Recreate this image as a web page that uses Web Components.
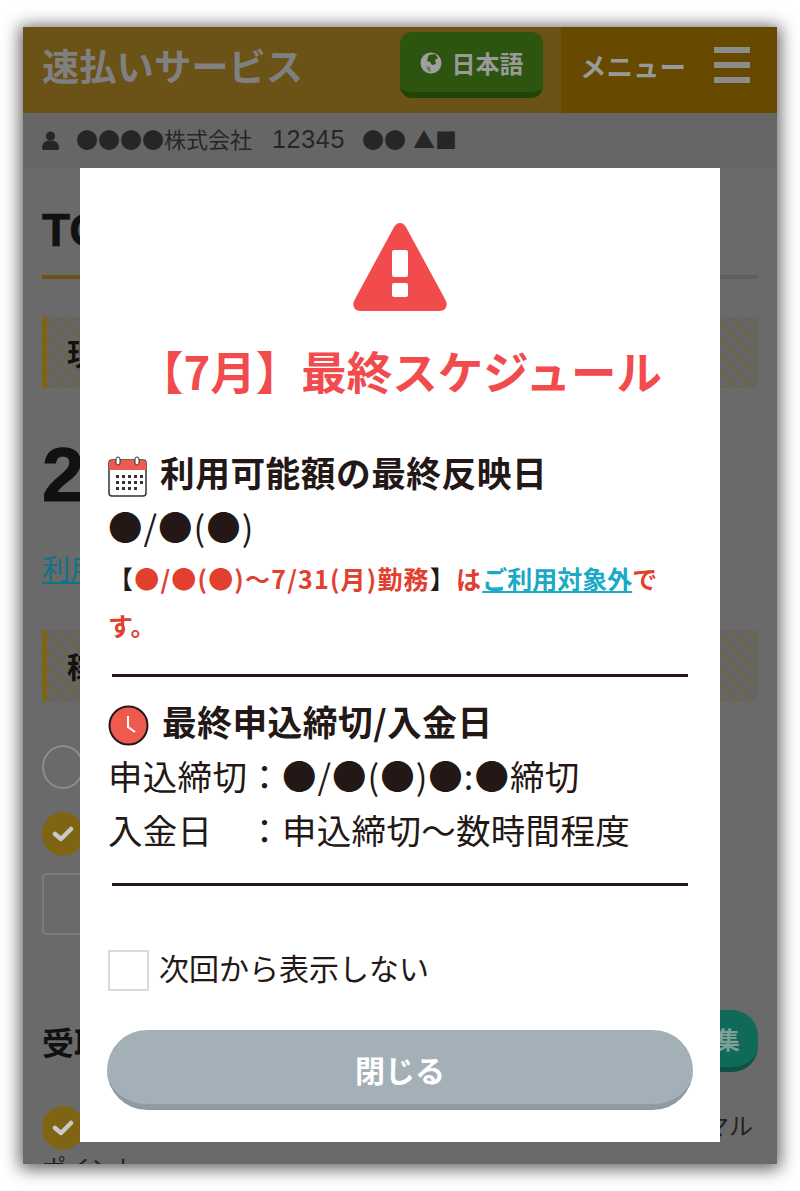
<!DOCTYPE html>
<html lang="ja"><head><meta charset="utf-8"><title>速払いサービス</title>
<style>
html,body{margin:0;background:#fff}
body{font-family:"Noto Sans CJK JP","Noto Sans",sans-serif;width:800px;height:1191px;overflow:hidden}
</style></head><body>
<x-phone>
  <x-topbar title-text="速払いサービス" lang-text="日本語" menu-text="メニュー"></x-topbar>
  <x-userbar>
    <span>●●●●株式会社</span>
    <span style="font:400 25px 'Liberation Sans',sans-serif;letter-spacing:.7px;margin:3px 0 0 3px">12345</span>
    <span>●●</span>
    <span style="margin-left:-10px">▲■</span>
  </x-userbar>
  <x-behind></x-behind>
  <x-modal></x-modal>
</x-phone>
<script>
const def=(name,html,setup)=>customElements.define(name,class extends HTMLElement{
  constructor(){super();this.attachShadow({mode:'open'}).innerHTML=html;}
  connectedCallback(){if(setup)setup(this);}
});
def('x-phone',`<style>
:host{display:flex;flex-direction:column;position:relative;width:754px;height:1137px;margin:27px 23px;background:#6a6a6a;overflow:hidden;box-shadow:0 2px 16px 3px rgba(0,0,0,.62)}
</style><slot></slot>`);
def('x-topbar',`<style>
:host{display:flex;height:86px;flex:none;background:#6b5216;align-items:stretch}
.logo{flex:1;padding-left:19px;font:700 37.300px/76px "Noto Sans CJK JP",sans-serif;color:#808080;white-space:nowrap}
.lang{box-sizing:border-box;width:143px;height:66px;margin:5px 18px 0 0;border-radius:12px;background:#2d5510;border-bottom:6px solid #214208;display:flex;align-items:center;justify-content:center;gap:10px;color:#9a9a9a;font:700 24px "Noto Sans CJK JP",sans-serif}
.menu{width:216px;background:#684900;display:flex;align-items:center;padding-left:19px;box-sizing:border-box;color:#999;font:700 26.500px "Noto Sans CJK JP",sans-serif}
.menu span{width:134px;white-space:nowrap;margin-top:-10px}
.burger{display:flex;flex-direction:column;justify-content:space-between;width:36px;height:36px;margin-top:-10px}
.burger i{height:6px;background:#8c8c8c}
svg{display:block}
</style>
<div class="logo" id="t"></div>
<div class="lang"><svg width="22" height="24" viewBox="0 -2 22 24"><circle cx="11" cy="11" r="10.500" fill="#a0a0a0"/><path d="M9 3l6-1 3 4-3 2 1 4-4 1-2-3-3-1 1-4z" fill="#2d5510"/><path d="M6 14l4 1 1 5-3-1z" fill="#2d5510" opacity=".5"/></svg><span id="l"></span></div>
<div class="menu"><span id="m"></span><div class="burger"><i></i><i></i><i></i></div></div>`,
el=>{const s=el.shadowRoot;s.getElementById('t').textContent=el.getAttribute('title-text');s.getElementById('l').textContent=el.getAttribute('lang-text');s.getElementById('m').textContent=el.getAttribute('menu-text');});
def('x-userbar',`<style>
:host{display:flex;box-sizing:border-box;flex:none;height:55px;background:#666;align-items:center;padding:0 0 5px 19px;gap:17px;color:#262626;font:400 22px "Noto Sans CJK JP",sans-serif;white-space:nowrap}
svg{margin-top:5px}
</style><svg width="17" height="19" viewBox="0 0 17 19"><circle cx="8.500" cy="5" r="4.600" fill="#262626"/><path d="M0 17c0-5 3-7.500 8.500-7.500S17 12 17 17c0 1.500-1 2-2 2H2c-1 0-2-.5-2-2z" fill="#262626"/></svg><slot></slot>`);
def('x-section',`<style>
:host{display:block;flex:none;box-sizing:border-box;height:71px;border-left:5px solid #7f6414;padding-left:20px;font:700 30px/71px "Noto Sans CJK JP",sans-serif;color:#111;white-space:nowrap;background:repeating-linear-gradient(45deg,#6b6453 0 5.500px,#666 5.500px 11.300px)}
</style><slot></slot>`);
def('x-check',`<style>
:host{display:flex;width:42px;height:44px;flex:none;border-radius:50%;background:#7f6414;align-items:center;justify-content:center}
</style><svg width="22" height="16" viewBox="0 0 22 16"><path d="M3 8l6 5 10-10" fill="none" stroke="#c9c9c9" stroke-width="4.500" stroke-linecap="round" stroke-linejoin="round"/></svg>`);
def('x-behind',`<style>
:host{display:flex;flex-direction:column;padding:32px 19px 0;flex:1;color:#111;font-family:"Noto Sans CJK JP",sans-serif;min-height:0}
.h1,.rule,.num,.link,.radio,.last{flex:none}
.h1{font:700 46px/60px "Liberation Sans",sans-serif;height:60px;white-space:nowrap;-webkit-text-stroke:.6px #111}
.rule{height:4px;margin-top:15px;background:linear-gradient(90deg,#6b5216 0 38px,#5e5e5e 38px)}
.num{font:700 76px/86px "Liberation Sans",sans-serif;margin-top:44px;height:86px;-webkit-text-stroke:1px #111}
.link{font-size:28px;line-height:40px;color:#0f7486;text-decoration:underline;margin-top:30px;white-space:nowrap}
.radio{box-sizing:border-box;width:42px;height:44px;border:2px solid #8d8d8d;border-radius:50%;margin-top:44px}
.box{box-sizing:border-box;height:62px;border:2px solid #7b7b7b;border-radius:4px;width:100px;flex:none}
.row{display:flex;justify-content:space-between;align-items:center;margin-top:75px;height:62px;flex:none;font:700 32px "Noto Sans CJK JP",sans-serif;white-space:nowrap}
.pill{display:flex;width:120px;height:62px;box-sizing:border-box;border-radius:26px;background:#0f6a5a;border-bottom:5px solid #0b5145;color:#7f9f98;font-size:24px;align-items:center;justify-content:flex-end;padding-right:18px}
.row2{display:flex;justify-content:space-between;margin-top:34px;height:44px;flex:none;font-size:24px;color:#222;white-space:nowrap}
.row2 span{line-height:36px;margin-top:1px;margin-right:5px}
.last{font-size:24px;line-height:34px;color:#222;white-space:nowrap}
</style>
<div class="h1">TOP</div><div class="rule"></div>
<x-section style="margin-top:38px">現在</x-section>
<div class="num">20</div>
<div class="link">利用可能額</div>
<x-section style="margin-top:42px">稼働</x-section>
<div class="radio"></div>
<x-check style="margin-top:23px"></x-check>
<div class="box" style="margin-top:17px"></div>
<div class="row"><span>受取</span><div class="pill">編集</div></div>
<div class="row2"><x-check></x-check><span>ノーマル</span></div>
<div class="last">ポイント</div>`);
def('x-modal',`<style>
:host{position:absolute;left:57px;top:141px;width:640px;height:974px;background:#fff;color:#231815;font-family:"Noto Sans CJK JP",sans-serif;display:flex;flex-direction:column;padding:55px 28px 0;box-sizing:border-box}
svg{display:block;flex:none;margin-top:8px}
.warn{align-self:center;margin:0 0 0 -1px}
h1{margin:20px -10px 0;font:700 45.500px/78px "Noto Sans CJK JP",sans-serif;color:#f24b4e;text-align:center;white-space:nowrap}
.head{display:flex;align-items:center;gap:13px;margin:0;font:700 34.700px/54px "Noto Sans CJK JP",sans-serif;letter-spacing:.5px;white-space:nowrap}
.first{margin-top:36px;height:54px}
.big{font-size:34.500px;letter-spacing:.3px;line-height:54px;white-space:nowrap}
.big span{letter-spacing:1px}
.note{font:700 25px/47px "Noto Sans CJK JP",sans-serif;color:#e2402f;margin-top:2px;width:560px}
.note b{color:#231815;font-weight:700}
.note span{letter-spacing:1.200px}
.note a{color:#1aa9c7;text-decoration:underline}
hr{border:0;height:3px;background:#231815;margin:25px 4px 0 4px;width:576px;flex:none}
.ck{display:flex;align-items:flex-start;gap:10px;margin-top:64px;font-size:30px;line-height:34px;white-space:nowrap}
.ck i{display:block;box-sizing:border-box;width:41px;height:41px;border:2px solid #d9d9d6;background:#fff;flex:none}
</style>
<svg class="warn" width="94" height="88" viewBox="0 0 94 88"><path d="M47 0c3 0 5 2 6.500 5l39 72c3 6 0 11-6 11H7.500c-6 0-9-5-6-11l39-72C42 2 44 0 47 0z" fill="#f24b4e"/><rect x="39" y="27" width="16" height="27" rx="2" fill="#fff"/><rect x="39" y="60" width="16" height="14" rx="2" fill="#fff"/></svg>
<h1>【7月】最終スケジュール</h1>
<div class="head first"><svg width="39" height="41" viewBox="0 0 39 41"><rect x="1" y="4" width="37" height="36" rx="3" fill="#fff" stroke="#333" stroke-width="1.500"/><path d="M1 14V7a3 3 0 0 1 3-3h31a3 3 0 0 1 3 3v7z" fill="#ee5b4e"/><rect x="8" y="1" width="4" height="8" rx="2" fill="#fff" stroke="#333"/><rect x="27" y="1" width="4" height="8" rx="2" fill="#fff" stroke="#333"/><g fill="#333"><path d="M8 19h3v3H8zM14 19h3v3h-3zM20 19h3v3h-3zM26 19h3v3h-3zM32 19h3v3h-3zM8 25h3v3H8zM14 25h3v3h-3zM20 25h3v3h-3zM26 25h3v3h-3zM32 25h3v3h-3zM8 31h3v3H8zM14 31h3v3h-3zM20 31h3v3h-3zM26 31h3v3h-3z"/></g></svg><span>利用可能額の最終反映日</span></div>
<div class="big"><span>●/●(●)</span></div>
<div class="note"><span><b>【</b>●/●(●)〜7/31(月)勤務<b>】</b>は</span><a>ご利用対象外</a>です。</div>
<hr>
<div class="head" style="margin-top:17px;height:54px"><svg width="41" height="41" viewBox="0 0 41 41"><circle cx="20.500" cy="20.500" r="19" fill="#ee5b4e" stroke="#231815" stroke-width="2"/><path d="M20 11v11l7 5" fill="none" stroke="#fff" stroke-width="2"/></svg><span>最終申込締切/入金日</span></div>
<div class="big">申込締切：<span>●/●(●)●:●</span>締切</div>
<div class="big">入金日　：申込締切〜数時間程度</div>
<hr style="margin-top:27px">
<div class="ck"><i></i><span>次回から表示しない</span></div>
<button-close></button-close>`);
def('button-close',`<style>
:host{display:block;box-sizing:border-box;width:586px;height:80px;margin:39px 0 0 -1px;border-radius:40px;background:#a3b0b8;border-bottom:6px solid #8e9ba3;color:#fff;font:700 30px/78px "Noto Sans CJK JP",sans-serif;text-align:center}
</style><slot>閉じる</slot>`);
</script>
</body></html>
